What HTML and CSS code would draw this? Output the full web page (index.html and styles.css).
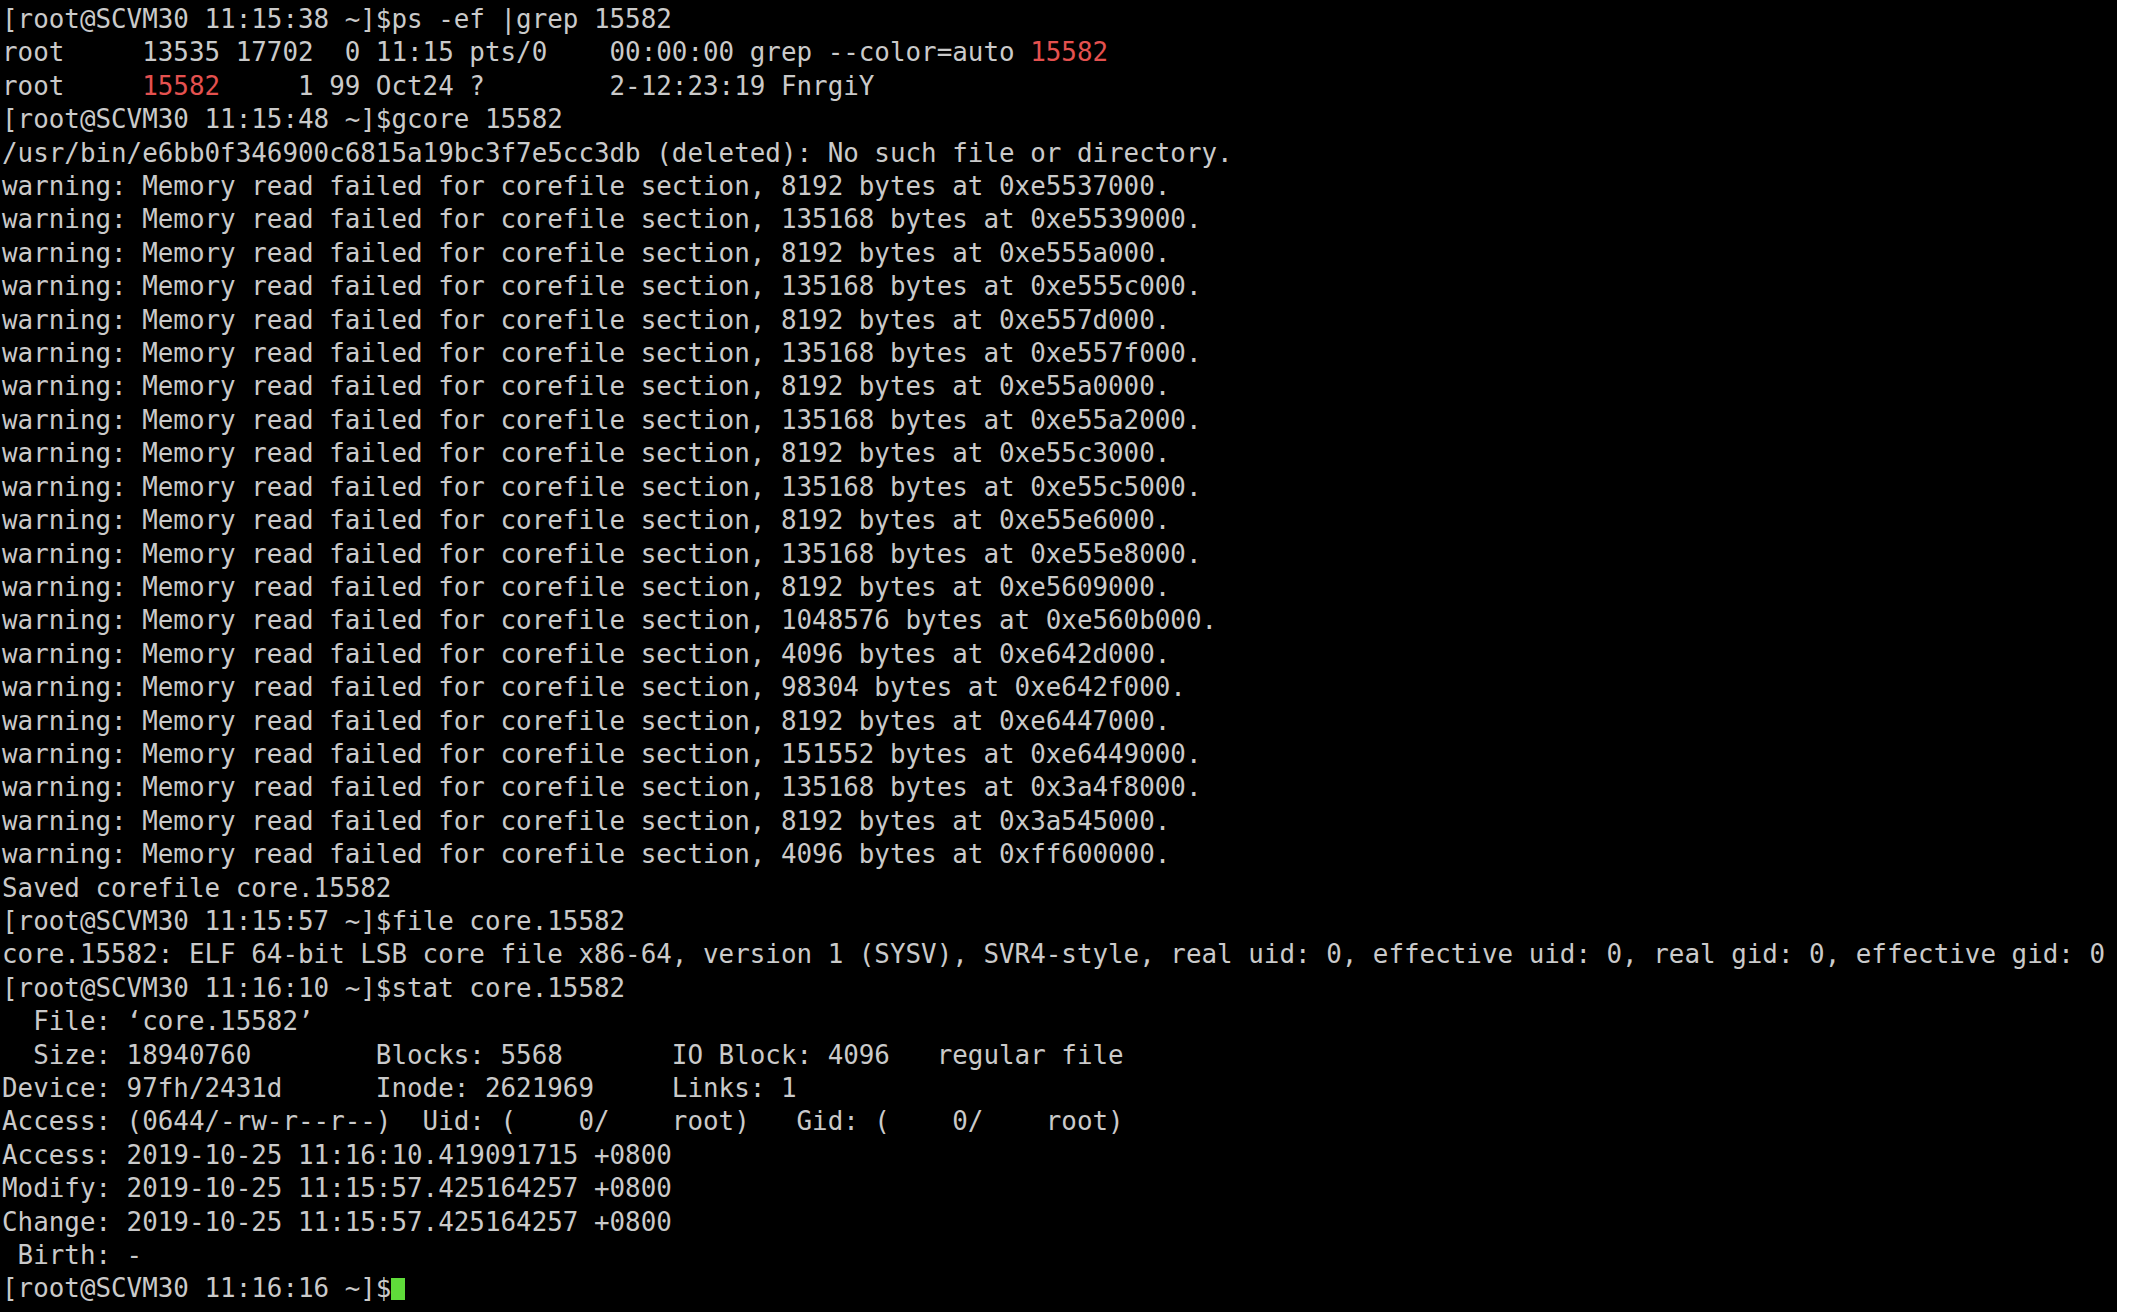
FILE: index.html
```html
<!DOCTYPE html>
<html>
<head>
<meta charset="utf-8">
<link rel="stylesheet" href="styles.css">
</head>
<body>
<div class="screen">
<div class="term">
<pre class="out">[root@SCVM30 11:15:38 ~]$ps -ef |grep 15582
root     13535 17702  0 11:15 pts/0    00:00:00 grep --color=auto <span class="hl">15582</span>
root     <span class="hl">15582</span>     1 99 Oct24 ?        2-12:23:19 FnrgiY
[root@SCVM30 11:15:48 ~]$gcore 15582
/usr/bin/e6bb0f346900c6815a19bc3f7e5cc3db (deleted): No such file or directory.
warning: Memory read failed for corefile section, 8192 bytes at 0xe5537000.
warning: Memory read failed for corefile section, 135168 bytes at 0xe5539000.
warning: Memory read failed for corefile section, 8192 bytes at 0xe555a000.
warning: Memory read failed for corefile section, 135168 bytes at 0xe555c000.
warning: Memory read failed for corefile section, 8192 bytes at 0xe557d000.
warning: Memory read failed for corefile section, 135168 bytes at 0xe557f000.
warning: Memory read failed for corefile section, 8192 bytes at 0xe55a0000.
warning: Memory read failed for corefile section, 135168 bytes at 0xe55a2000.
warning: Memory read failed for corefile section, 8192 bytes at 0xe55c3000.
warning: Memory read failed for corefile section, 135168 bytes at 0xe55c5000.
warning: Memory read failed for corefile section, 8192 bytes at 0xe55e6000.
warning: Memory read failed for corefile section, 135168 bytes at 0xe55e8000.
warning: Memory read failed for corefile section, 8192 bytes at 0xe5609000.
warning: Memory read failed for corefile section, 1048576 bytes at 0xe560b000.
warning: Memory read failed for corefile section, 4096 bytes at 0xe642d000.
warning: Memory read failed for corefile section, 98304 bytes at 0xe642f000.
warning: Memory read failed for corefile section, 8192 bytes at 0xe6447000.
warning: Memory read failed for corefile section, 151552 bytes at 0xe6449000.
warning: Memory read failed for corefile section, 135168 bytes at 0x3a4f8000.
warning: Memory read failed for corefile section, 8192 bytes at 0x3a545000.
warning: Memory read failed for corefile section, 4096 bytes at 0xff600000.
Saved corefile core.15582
[root@SCVM30 11:15:57 ~]$file core.15582
core.15582: ELF 64-bit LSB core file x86-64, version 1 (SYSV), SVR4-style, real uid: 0, effective uid: 0, real gid: 0, effective gid: 0
[root@SCVM30 11:16:10 ~]$stat core.15582
  File: ‘core.15582’
  Size: 18940760        Blocks: 5568       IO Block: 4096   regular file
Device: 97fh/2431d      Inode: 2621969     Links: 1
Access: (0644/-rw-r--r--)  Uid: (    0/    root)   Gid: (    0/    root)
Access: 2019-10-25 11:16:10.419091715 +0800
Modify: 2019-10-25 11:15:57.425164257 +0800
Change: 2019-10-25 11:15:57.425164257 +0800
 Birth: -
[root@SCVM30 11:16:16 ~]$<span class="cursor"></span></pre>
</div>
<div class="edge"></div>
</div>
</body>
</html>
```

FILE: styles.css
```css
html, body {
  margin: 0;
  padding: 0;
  background: #ffffff;
}

.screen {
  display: flex;
  width: 2132px;
  height: 1312px;
  overflow: hidden;
}

.term {
  width: 2117px;
  height: 1312px;
  background: #000000;
  overflow: hidden;
}

.edge {
  flex: 1;
  background: #ffffff;
}

.out {
  margin: 0;
  padding: 3px 0 0 2px;
  font-family: "DejaVu Sans Mono", "Liberation Mono", monospace;
  font-size: 25.88px;
  line-height: 33.4px;
  color: #cacaca;
  white-space: pre;
}

.hl {
  color: #e4514f;
}

.cursor {
  display: inline-block;
  width: 14px;
  height: 22px;
  vertical-align: -3px;
  background: #5fdc3a;
}
```
